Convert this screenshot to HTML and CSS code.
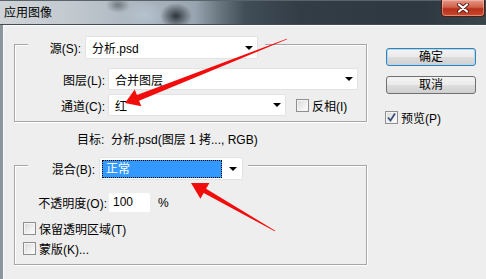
FILE: index.html
```html
<!DOCTYPE html>
<html lang="zh-CN">
<head>
    <meta charset="UTF-8">
    <title>应用图像</title>
    <link rel="stylesheet" href="styles.css">
</head>
<body>
    <div class="window">
        <!-- Title Bar -->
        <div class="titlebar">
            <span class="title">应用图像</span>
            <div class="close-btn">
                <svg width="14" height="10" viewBox="0 0 14 10">
                    <path d="M3 1.5 L11 8.5 M11 1.5 L3 8.5" stroke="#5a1a10" stroke-width="4" stroke-linecap="round"/>
                    <path d="M3 1.5 L11 8.5 M11 1.5 L3 8.5" stroke="#fff" stroke-width="2.2" stroke-linecap="round"/>
                </svg>
            </div>
        </div>

        <div class="frame">
            <div class="left-col">
                <!-- Source group -->
                <div class="group group-source">
                    <div class="group-head head-source">
                        <span class="lbl lbl-source">源(S):</span>
                        <div class="select select-source"><span class="select-text">分析.psd</span><i class="caret"></i></div>
                    </div>
                    <div class="row row-layer">
                        <span class="lbl lbl-wide">图层(L):</span>
                        <div class="select select-layer"><span class="select-text">合并图层</span><i class="caret"></i></div>
                    </div>
                    <div class="row row-channel">
                        <span class="lbl lbl-wide">通道(C):</span>
                        <div class="select select-channel"><span class="select-text">红</span><i class="caret"></i></div>
                        <span class="checkbox invert-box"></span>
                        <span class="check-text">反相(I)</span>
                    </div>
                </div>

                <div class="target">目标:&nbsp; 分析.psd(图层 1 拷..., RGB)</div>

                <!-- Blending group -->
                <div class="group group-blend">
                    <div class="group-head head-blend">
                        <span class="lbl lbl-blend">混合(B):</span>
                        <div class="select select-blend"><span class="highlight">正常</span><i class="caret"></i></div>
                    </div>
                    <div class="row row-opacity">
                        <span class="lbl lbl-opacity">不透明度(O):</span>
                        <div class="num-input">100</div>
                        <span class="unit">%</span>
                    </div>
                    <div class="check-row check-first">
                        <span class="checkbox"></span>
                        <span class="check-text">保留透明区域(T)</span>
                    </div>
                    <div class="check-row">
                        <span class="checkbox"></span>
                        <span class="check-text">蒙版(K)...</span>
                    </div>
                </div>
            </div>

            <!-- Buttons -->
            <div class="right-col">
                <div class="btn btn-default">确定</div>
                <div class="btn btn-cancel">取消</div>
                <div class="preview-row">
                    <span class="checkbox checked">
                        <svg width="11" height="11" viewBox="0 0 11 11">
                            <path d="M2 5.5 L4.5 8.5 L9 1.5" fill="none" stroke="#3b4f7a" stroke-width="1.8"/>
                        </svg>
                    </span>
                    <span class="check-text">预览(P)</span>
                </div>
            </div>
        </div>

        <!-- Red annotation arrows -->
        <svg class="arrows" width="486" height="279" viewBox="0 0 486 279">
            <polygon fill="#f20d0d" points="287.2,39.3 286.8,38.7 136.9,95.1 134.7,89.5 125,103 141.3,106.3 139.1,100.7"/>
            <polygon fill="#f20d0d" points="275.3,230.7 274.7,231.3 203.7,193.1 200.4,198.7 191,183 209.4,183.1 206.1,188.7"/>
        </svg>
    </div>
</body>
</html>
```

FILE: styles.css
```css
/* Reset */
* {
    margin: 0;
    padding: 0;
    box-sizing: border-box;
}

body {
    font-family: "Liberation Sans", "Noto Sans CJK SC", sans-serif;
    font-size: 12px;
    color: #000;
    background-color: #eeeeee;
    overflow: hidden;
}

.window {
    position: relative;
    width: 486px;
    height: 279px;
    overflow: hidden;
    background-color: #eeeeee;
}

/* Title bar (blurred glass look) */
.titlebar {
    height: 25px;
    display: flex;
    align-items: flex-start;
    border-top: 1px solid #5b636a;
    border-bottom: 1px solid #454c52;
    background:
        radial-gradient(ellipse 16px 13px at 176px 15px, rgba(25, 30, 36, 0.85), transparent),
        radial-gradient(ellipse 12px 8px at 118px 4px, rgba(60, 66, 72, 0.55), transparent),
        radial-gradient(ellipse 22px 14px at 145px 14px, rgba(190, 205, 220, 0.6), transparent),
        linear-gradient(to right, #cfd4d8 0, #c2c9cf 70px, #aeb8c1 130px, #98a5b0 195px, #6c7882 218px, #414d57 245px, #323d46 300px, #2e3840 420px, #3a444b 486px);
}

.title {
    margin-left: 4px;
    margin-top: 4px;
    line-height: 16px;
    color: #000;
}

.close-btn {
    margin-left: auto;
    margin-right: 1px;
    margin-top: -1px;
    width: 44px;
    height: 17px;
    display: flex;
    align-items: center;
    justify-content: center;
    border: 1px solid #4a1f18;
    border-top: none;
    border-radius: 0 0 4px 4px;
    background: linear-gradient(to bottom, #e39a88 0, #d0604a 45%, #b8301c 55%, #c84a2e 100%);
    box-shadow: inset 0 0 0 1px rgba(255, 200, 190, 0.5);
}

/* Dialog body */
.frame {
    height: 254px;
    display: flex;
    padding-left: 11px;
    border-left: 3px solid #8c959c;
    box-shadow: inset 1px 1px 0 #fafafa;
}

.left-col {
    width: 353px;
}

/* Group boxes */
.group {
    border: 1px solid #a6a6a6;
    box-shadow: 1px 1px 0 #ffffff, inset 1px 1px 0 #ffffff;
}

.group-source {
    margin-top: 19px;
    padding-bottom: 5px;
}

.group-blend {
    margin-top: 17px;
    padding-bottom: 7px;
}

.group-head {
    display: flex;
    align-items: center;
    height: 23px;
    margin-top: -9px;
    margin-left: 13px;
    background-color: #eeeeee;
    width: max-content;
}

.head-source {
    padding-right: 7px;
}

.head-blend {
    padding-right: 5px;
}

.row {
    display: flex;
    align-items: center;
    height: 22px;
}

.row-layer {
    margin-top: 9px;
}

.row-channel {
    margin-top: 4px;
}

.lbl {
    text-align: right;
    white-space: nowrap;
}

.lbl-source {
    width: 53px;
    margin-right: 4px;
}

.lbl-wide {
    width: 90px;
    margin-right: 3px;
}

.lbl-blend {
    width: 67px;
    margin-right: 4px;
}

.lbl-opacity {
    width: 92px;
    margin-right: 2px;
}

/* Dropdowns */
.select {
    display: flex;
    align-items: center;
    height: 100%;
    background-color: #ffffff;
    border: 1px solid #e2e2e2;
    border-radius: 2px;
    padding-left: 6px;
    padding-right: 4px;
}

.select-source { width: 173px; }
.select-layer { width: 250px; }
.select-channel { width: 178px; margin-right: 10px; }

.select-blend {
    width: 144px;
    padding-left: 2px;
    padding-right: 5px;
}

.select-text {
    flex: 1;
}

.highlight {
    width: 120px;
    height: 18px;
    margin-right: auto;
    padding-left: 3px;
    line-height: 16px;
    color: #ffffff;
    background-color: #3399ff;
    border: 1px dotted #000;
}

.caret {
    width: 0;
    height: 0;
    border-left: 4px solid transparent;
    border-right: 4px solid transparent;
    border-top: 4px solid #000;
}

.target {
    margin-top: 10px;
    margin-left: 63px;
    line-height: 16px;
}

/* Opacity row */
.row-opacity {
    margin-top: 13px;
    height: 19px;
}

.num-input {
    width: 41px;
    height: 100%;
    line-height: 19px;
    padding-left: 4px;
    background-color: #ffffff;
    border-radius: 2px;
}

.unit {
    margin-left: 8px;
}

/* Checkboxes */
.checkbox {
    width: 13px;
    height: 13px;
    flex-shrink: 0;
    display: flex;
    align-items: center;
    justify-content: center;
    border: 1px solid #8e8f8f;
    background: linear-gradient(135deg, #d8d8d8 0, #f4f4f4 70%, #ffffff 100%);
    box-shadow: inset 0 0 0 1px #f4f4f4;
}

.check-text {
    margin-left: 3px;
    white-space: nowrap;
}

.check-row {
    display: flex;
    align-items: center;
    height: 18px;
    margin-top: 2px;
    padding-left: 8px;
}

.check-first {
    margin-top: 7px;
}

/* Right column buttons */
.right-col {
    margin-left: 19px;
    padding-top: 23px;
    width: 90px;
}

.btn {
    height: 18px;
    line-height: 16px;
    text-align: center;
    border: 1px solid #707070;
    border-radius: 3px;
    background: linear-gradient(to bottom, #f3f3f3 0, #ebebeb 48%, #dddddd 52%, #cfcfcf 100%);
}

.btn-default {
    border-color: #3c7fb1;
    box-shadow: inset 0 0 0 1px #a8dcf4;
}

.btn-cancel {
    margin-top: 10px;
}

.preview-row {
    display: flex;
    align-items: center;
    height: 14px;
    margin-top: 16px;
    margin-left: -1px;
}

/* Annotation overlay */
.arrows {
    position: absolute;
    left: 0;
    top: 0;
    pointer-events: none;
}
```
